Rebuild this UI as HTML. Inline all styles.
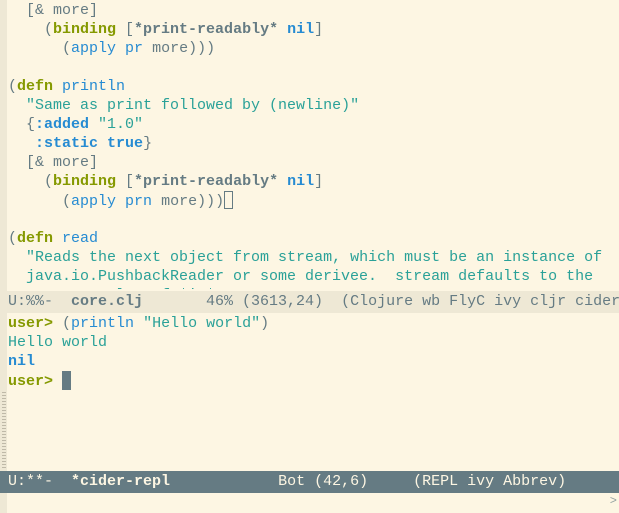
<!DOCTYPE html>
<html><head><meta charset="utf-8"><style>
html,body{margin:0;padding:0;width:619px;height:513px;overflow:hidden;background:#fdf6e3;}
body{position:relative;font-family:"Liberation Mono",monospace;font-size:15px;color:#657b83;}
.fr{position:absolute;left:0;width:7px;background:#eee8d5;}
.pane{position:absolute;left:8px;right:0;overflow:hidden;line-height:19px;}
.l{height:19px;white-space:pre;}
.k{color:#859900;font-weight:bold}
.f{color:#268bd2}
.s{color:#2aa198}
.b{color:#268bd2;font-weight:bold}
.v{font-weight:bold}
.ml{position:absolute;left:0;right:0;white-space:pre;padding-left:8px;line-height:21px;}
</style></head><body>
<div class="fr" style="top:0;height:291px"></div>
<div class="fr" style="top:313px;height:158px"></div>
<div style="position:absolute;left:2px;top:392px;width:4px;height:78px;background:repeating-linear-gradient(#bfb9a8 0 1px,transparent 1px 3px)"></div>
<div class="fr" style="top:493px;height:20px"></div>
<div class="pane" style="top:1px;height:288px">
<div class="l">  [&amp; more]</div>
<div class="l">    (<span class="k">binding</span> [<span class="v">*print-readably*</span> <span class="b">nil</span>]</div>
<div class="l">      (<span class="f">apply</span> <span class="f">pr</span> more)))</div>
<div class="l"> </div>
<div class="l">(<span class="k">defn</span> <span class="f">println</span></div>
<div class="l">  <span class="s">"Same as print followed by (newline)"</span></div>
<div class="l">  {<span class="b">:added</span> <span class="s">"1.0"</span></div>
<div class="l">   <span class="b">:static</span> <span class="b">true</span>}</div>
<div class="l">  [&amp; more]</div>
<div class="l">    (<span class="k">binding</span> [<span class="v">*print-readably*</span> <span class="b">nil</span>]</div>
<div class="l">      (<span class="f">apply</span> <span class="f">prn</span> more)))<span style="display:inline-block;width:7px;height:16px;border:1px solid #657b83;vertical-align:-4px"></span></div>
<div class="l"> </div>
<div class="l">(<span class="k">defn</span> <span class="f">read</span></div>
<div class="l">  <span class="s">"Reads the next object from stream, which must be an instance of</span></div>
<div class="l"><span class="s">  java.io.PushbackReader or some derivee.  stream defaults to the</span></div>
<div class="l"><span class="s">  current value of *in*.</span></div>
</div>
<div class="ml" style="top:291px;height:22px;background:#eee8d5;color:#657b83">U:%%-  <b>core.clj</b>       46% (3613,24)  (Clojure wb FlyC ivy cljr cider</div>
<div class="pane" style="top:314px;height:157px">
<div class="l"><span class="k">user&gt;</span> (<span class="f">println</span> <span class="s">"Hello world"</span>)</div>
<div class="l"><span class="s">Hello world</span></div>
<div class="l"><span class="b">nil</span></div>
<div class="l"><span class="k">user&gt;</span> <span style="display:inline-block;width:9px;height:19px;background:#657b83;vertical-align:-5px"></span></div>
</div>
<div class="ml" style="top:471px;height:22px;background:#657b83;color:#fdf6e3">U:**-  <b>*cider-repl</b>            Bot (42,6)     (REPL ivy Abbrev)</div>
<div style="position:absolute;right:2px;top:494px;font-size:12px;color:#93a1a1">&gt;</div>
</body></html>
